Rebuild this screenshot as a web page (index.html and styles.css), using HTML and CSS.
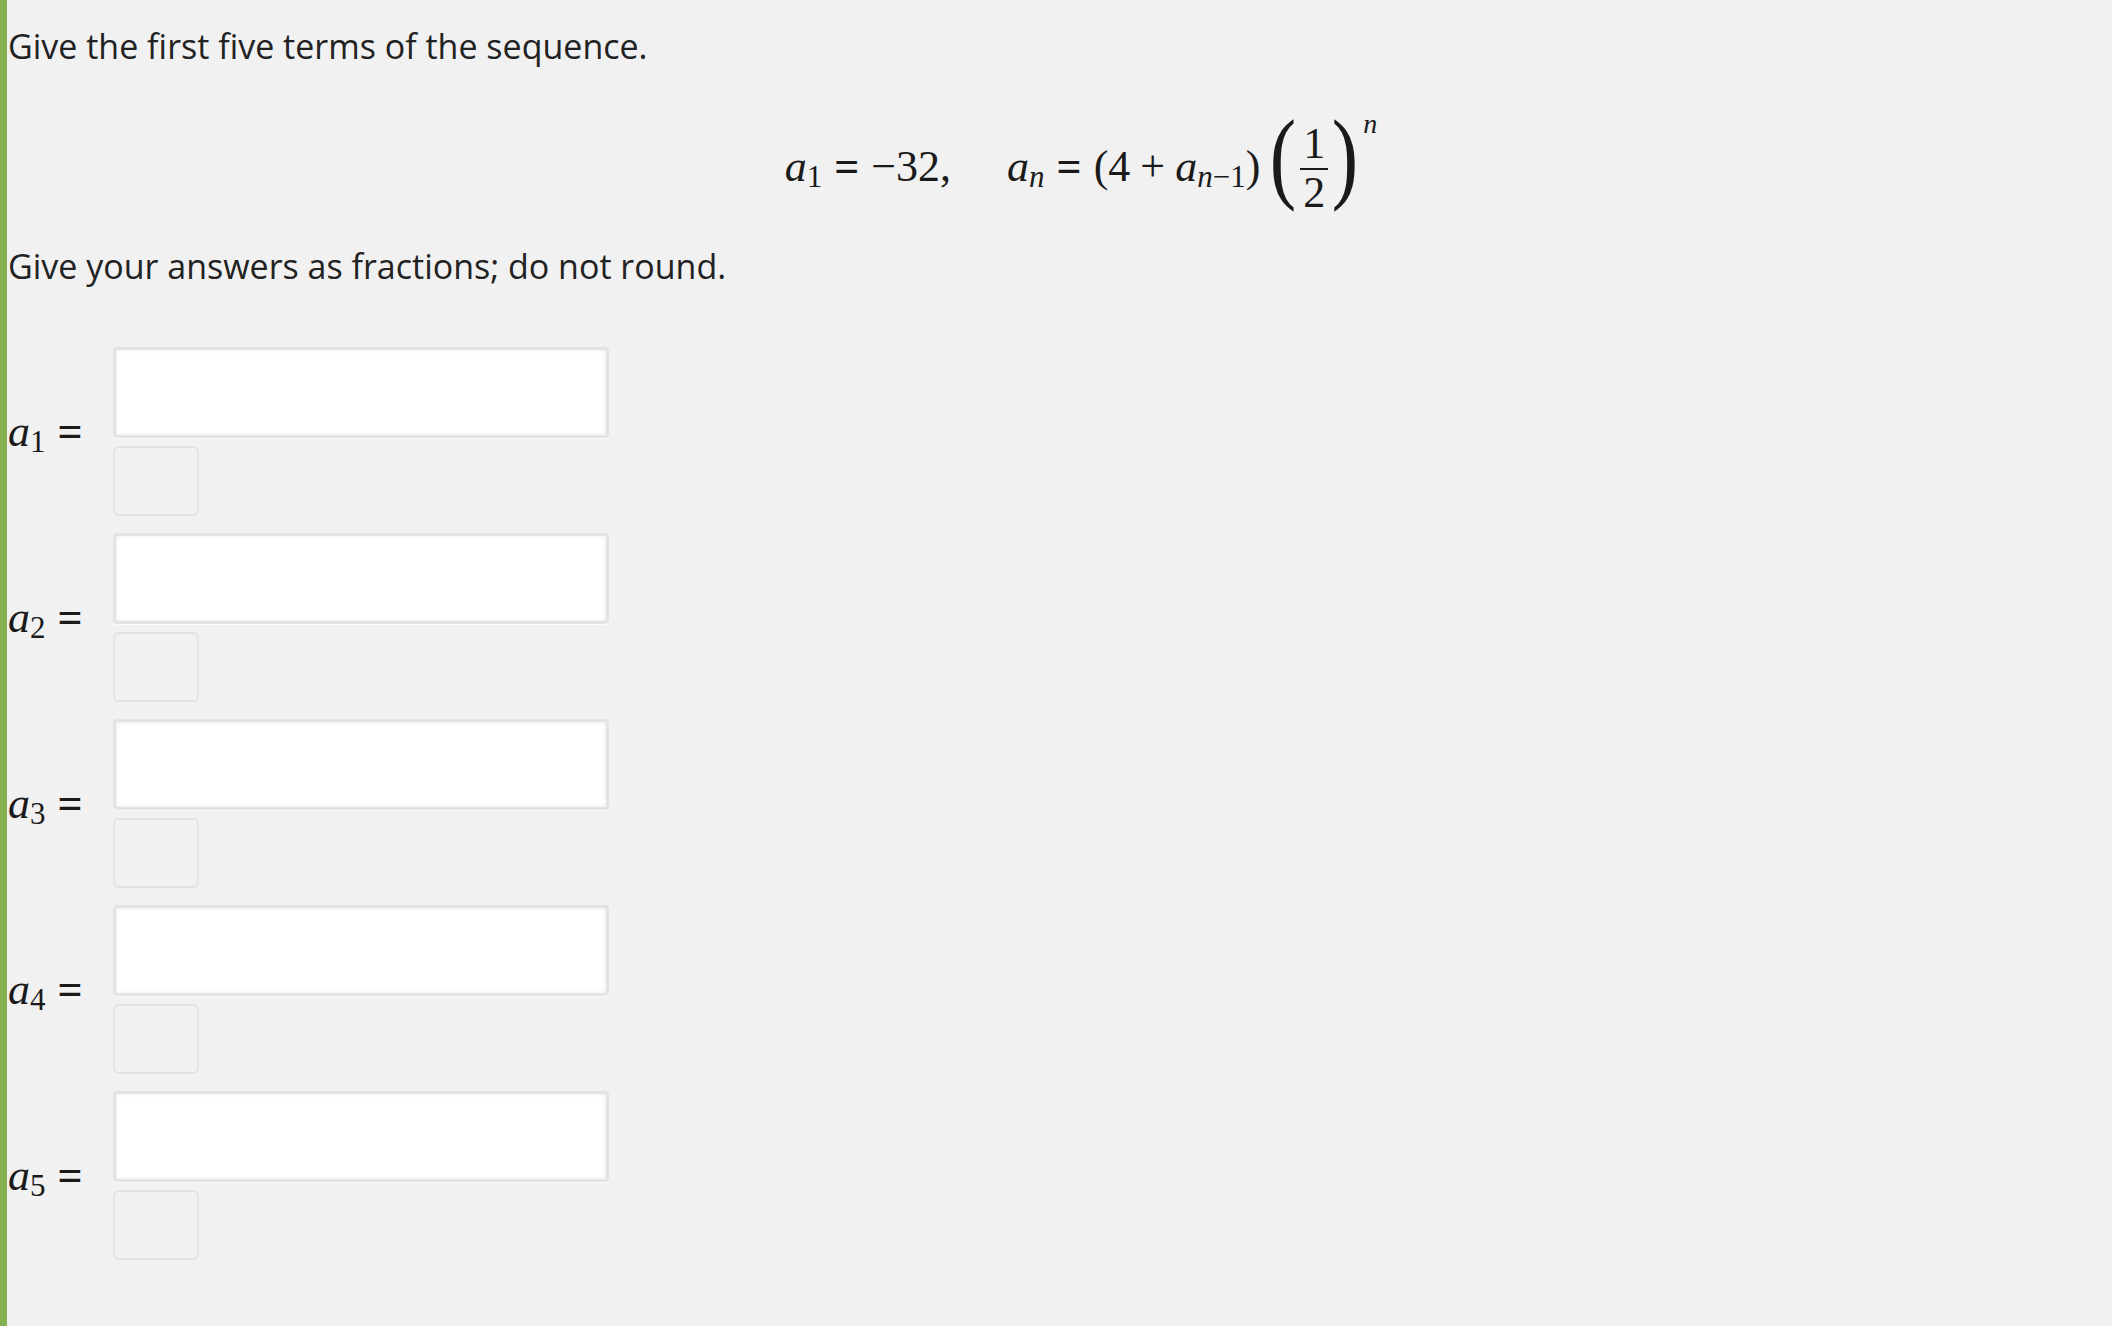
FILE: index.html
```html
<!DOCTYPE html>
<html lang="en">
<head>
<meta charset="utf-8">
<title>Sequence</title>
<link rel="stylesheet" href="styles.css">
</head>
<body>
<div class="page">
  <p class="prompt">Give the first five terms of the sequence.</p>
  <div class="formula"><span class="math"><i>a</i><sub>1</sub><span class="rel">=</span>−32,<span class="gap"></span><i>a</i><sub><i>n</i></sub><span class="rel">=</span>(4<span class="bin">+</span><i>a</i><sub><i>n</i>−1</sub>)<span class="delim open">(</span><span class="frac"><span class="num">1</span><span class="bar"></span><span class="den">2</span></span><span class="delim close">)</span><sup><i>n</i></sup></span></div>
  <p class="prompt second">Give your answers as fractions; do not round.</p>
  <div class="answers">
    <div class="row">
      <div class="label"><i>a</i><sub>1</sub><span class="eq">=</span></div>
      <div class="fields"><div class="input"></div><div class="unit"></div></div>
    </div>
    <div class="row">
      <div class="label"><i>a</i><sub>2</sub><span class="eq">=</span></div>
      <div class="fields"><div class="input"></div><div class="unit"></div></div>
    </div>
    <div class="row">
      <div class="label"><i>a</i><sub>3</sub><span class="eq">=</span></div>
      <div class="fields"><div class="input"></div><div class="unit"></div></div>
    </div>
    <div class="row">
      <div class="label"><i>a</i><sub>4</sub><span class="eq">=</span></div>
      <div class="fields"><div class="input"></div><div class="unit"></div></div>
    </div>
    <div class="row">
      <div class="label"><i>a</i><sub>5</sub><span class="eq">=</span></div>
      <div class="fields"><div class="input"></div><div class="unit"></div></div>
    </div>
  </div>
</div>
</body>
</html>
```
FILE: styles.css
```css
* { box-sizing: border-box; }
html, body { margin: 0; padding: 0; }
body {
  background: #f1f1f1;
  color: #222222;
  font-family: "Open Sans", "Noto Sans", sans-serif;
}
.page {
  min-height: 100vh;
  border-left: 7px solid #84b04f;
  padding: 23px 0 60px 1px;
}
.prompt {
  margin: 0;
  font-size: 34px;
  line-height: 46px;
}
.prompt.second { margin-top: 35px; }

.formula {
  margin-top: 55px;
  padding-left: 42px;
  text-align: center;
  font-family: "Liberation Serif", "Times New Roman", serif;
  font-size: 44px;
  line-height: 44px;
  color: #1a1a1a;
}
.math i { font-style: italic; }
.math sub, .label sub {
  font-size: 31px;
  line-height: 0;
  vertical-align: -6px;
}
.math sup {
  font-size: 28px;
  line-height: 0;
  vertical-align: 48px;
  margin-left: 5px;
}
.rel { margin: 0 12px; font-weight: bold; }
.bin { margin: 0 10px; }
.gap { display: inline-block; width: 56px; }
.delim {
  display: inline-block;
  width: 26px;
  text-align: center;
  transform: translateY(-3px) scale(1.8, 2.3);
  transform-origin: 50% 60%;
}
.delim.open { margin-left: 10px; }
.frac {
  display: inline-flex;
  flex-direction: column;
  align-items: stretch;
  vertical-align: 23px;
  margin: 0 4px;
}
.num, .den {
  display: block;
  line-height: 30px;
  height: 30px;
  text-align: center;
  padding: 0 3px;
}
.bar {
  display: block;
  height: 2px;
  background: #1a1a1a;
  margin: 9px 0 8px;
}

.answers {
  margin-top: 58px;
  display: flex;
  flex-direction: column;
  gap: 17px;
}
.row {
  display: flex;
  align-items: center;
}
.label {
  width: 105px;
  font-family: "Liberation Serif", "Times New Roman", serif;
  font-size: 44px;
  line-height: 40px;
  color: #1a1a1a;
}
.label i { font-style: italic; }
.eq { margin-left: 12px; font-weight: bold; }
.fields {
  display: flex;
  flex-direction: column;
  gap: 8px;
}
.input {
  width: 496px;
  height: 91px;
  background: #ffffff;
  border: 3px solid #e3e3e3;
  border-radius: 4px;
  box-shadow: inset 0 0 4px rgba(0, 0, 0, 0.09), 0 1px 0 #fbfbfb;
}
.unit {
  width: 86px;
  height: 70px;
  border: 2px solid #e3e3e3;
  border-radius: 6px;
}
```
